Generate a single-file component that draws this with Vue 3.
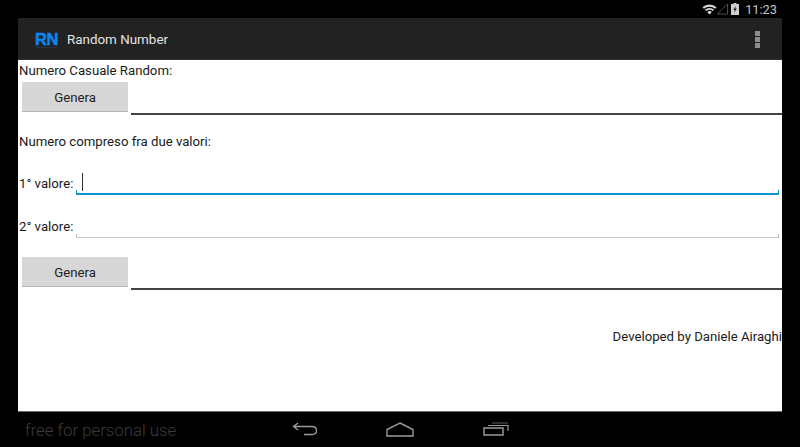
<template>
  <div class="device">
    <div class="status-bar">
      <svg class="wifi" width="15" height="11" viewBox="0 0 16 11">
        <path d="M0.5 3.2 A11 11 0 0 1 15.5 3.2 L14 4.8 A9 9 0 0 0 2 4.8 Z" fill="#d8d8d8" />
        <path d="M3 5.8 A7.5 7.5 0 0 1 13 5.8 L11.6 7.2 A5.5 5.5 0 0 0 4.4 7.2 Z" fill="#d8d8d8" />
        <path d="M5.5 8.2 A4 4 0 0 1 10.5 8.2 L8 10.8 Z" fill="#d8d8d8" />
      </svg>
      <svg class="signal" width="11" height="12" viewBox="0 0 12 12">
        <path d="M0.5 11.5 L11.5 0.5 V11.5 Z" fill="none" stroke="#555" stroke-width="1" />
      </svg>
      <svg class="battery" width="8" height="12" viewBox="0 0 8 12">
        <rect x="2.5" y="0" width="3" height="1.5" fill="#cfcfcf" />
        <rect x="0" y="1" width="8" height="11" fill="#cfcfcf" />
        <path d="M4.8 2.5 L2.2 7 H3.8 L3.2 10 L5.8 5.5 H4.2 Z" fill="#222" />
      </svg>
      <span class="clock">11:23</span>
    </div>

    <div class="screen">
      <header class="action-bar">
        <div class="logo">
          <span class="logo-text">RN</span>
          <span class="logo-sub"></span>
        </div>
        <span class="app-title">Random Number</span>
        <div class="overflow">
          <i></i>
          <i></i>
          <i></i>
        </div>
      </header>

      <main class="content">
        <p class="label first">Numero Casuale Random:</p>
        <div class="generate-row">
          <button class="btn">Genera</button>
          <div class="result"></div>
        </div>

        <p class="label range">Numero compreso fra due valori:</p>

        <div class="field-row one">
          <span class="label">1° valore:</span>
          <div class="field focused"><span class="caret"></span></div>
        </div>
        <div class="field-row two">
          <span class="label">2° valore:</span>
          <div class="field"></div>
        </div>

        <div class="generate-row second">
          <button class="btn">Genera</button>
          <div class="result"></div>
        </div>

        <p class="credit">Developed by Daniele Airaghi</p>
      </main>
    </div>

    <div class="nav-bar">
      <span class="watermark">free for personal use</span>
      <svg class="nav-back" width="26" height="14" viewBox="0 0 26 14">
        <path d="M6 1 L1.5 4.5 L6 8 M1.5 4.5 H20 Q24.5 4.5 24.5 8.5 Q24.5 12.5 20 12.5 H12" fill="none" stroke="#9a9a9a" stroke-width="1.3" />
      </svg>
      <svg class="nav-home" width="28" height="15" viewBox="0 0 28 15">
        <path d="M14 1 L27 7.5 V14 H1 V7.5 Z" fill="none" stroke="#9a9a9a" stroke-width="1.4" />
      </svg>
      <svg class="nav-recent" width="26" height="14" viewBox="0 0 26 14">
        <path d="M1 6 H20 V13 H1 Z" fill="none" stroke="#9a9a9a" stroke-width="1.4" />
        <path d="M5 3.5 H25 V9" fill="none" stroke="#9a9a9a" stroke-width="1.2" />
        <path d="M9 1 H25" fill="none" stroke="#777" stroke-width="0.8" />
      </svg>
    </div>
  </div>
</template>

<script setup>
</script>

<style>
html,
body {
  margin: 0;
  background: #000;
}
</style>

<style scoped>
.device {
  width: 800px;
  height: 447px;
  background: #000;
  display: flex;
  flex-direction: column;
  overflow: hidden;
  font-family: Roboto, "Liberation Sans", sans-serif;
}

.status-bar {
  height: 18px;
  display: flex;
  align-items: center;
  justify-content: flex-end;
  padding-right: 23px;
  flex-shrink: 0;
}

.battery {
  margin-left: 3px;
}

.clock {
  margin-left: 6px;
  color: #c4c4c4;
  font-size: 12.8px;
}

.screen {
  margin: 0 18px;
  display: flex;
  flex-direction: column;
  flex-shrink: 0;
  background: #fff;
  border-bottom: 1px solid #666;
  height: 392.5px;
}

.action-bar {
  height: 42px;
  flex-shrink: 0;
  background: #222;
  display: flex;
  align-items: center;
  padding: 0 22px 0 17px;
  box-shadow: inset 0 -1px 0 #333;
}

.logo {
  width: 23px;
  height: 16px;
  margin-top: 1px;
  display: flex;
  flex-direction: column;
  align-items: center;
}

.logo-text {
  color: #0a86f0;
  font-family: "Liberation Sans", sans-serif;
  font-weight: 700;
  font-size: 16.5px;
  line-height: 14px;
  letter-spacing: -0.3px;
  -webkit-text-stroke: 0.5px #0a86f0;
}

.logo-sub {
  width: 21px;
  height: 1px;
  margin-top: 1px;
  background: #223644;
}

.app-title {
  margin-left: 9px;
  margin-top: 1px;
  color: #e4e4e4;
  font-size: 13.4px;
}

.overflow {
  margin-left: auto;
  display: flex;
  flex-direction: column;
  gap: 1px;
}

.overflow i {
  display: block;
  width: 5px;
  height: 5px;
  background: #8c8c8c;
}

.content {
  flex: 1;
  min-height: 0;
  color: #1a1a1a;
  font-size: 13.2px;
  line-height: 18px;
}

.label {
  margin: 0;
  padding-left: 1px;
  white-space: nowrap;
}

.first {
  padding-top: 2px;
}

.generate-row {
  display: flex;
  align-items: flex-start;
  margin-top: 2px;
  padding-left: 4px;
}

.second {
  margin-top: 19px;
}

.btn {
  width: 106px;
  height: 30px;
  padding: 2px 0 0;
  flex-shrink: 0;
  border: 0;
  border-bottom: 1px solid #b4b4b4;
  background: #d7d7d7;
  color: #222;
  font-family: inherit;
  font-size: 13.2px;
}

.result {
  flex: 1;
  height: 2px;
  margin-top: 31px;
  margin-left: 3px;
  background: #444;
}

.range {
  margin-top: 18px;
}

.field-row {
  display: flex;
  align-items: flex-end;
}

.field-row .label {
  padding-bottom: 2px;
}

.one {
  margin-top: 16px;
}

.two {
  margin-top: 15px;
}

.field {
  width: 703px;
  height: 28px;
  margin-left: 3px;
  position: relative;
  border-bottom: 1px solid #c4c4c4;
  box-sizing: border-box;
}

.field::before,
.field::after {
  content: "";
  position: absolute;
  bottom: 0;
  width: 1px;
  height: 3px;
  background: #c4c4c4;
}

.field::before {
  left: 0;
}

.field::after {
  right: 0;
}

.focused {
  border-bottom: 2px solid #0f8fcb;
}

.focused::before,
.focused::after {
  background: #0f8fcb;
}

.caret {
  position: absolute;
  left: 6px;
  top: 6px;
  width: 1px;
  height: 18px;
  background: #333;
}

.credit {
  margin: 38px 0 0;
  text-align: right;
  white-space: nowrap;
}

.nav-bar {
  flex: 1;
  min-height: 0;
  position: relative;
  display: flex;
  align-items: center;
}

.watermark {
  position: absolute;
  left: 25px;
  top: 8px;
  color: #3c3c3c;
  font-size: 16.8px;
  font-weight: 300;
}

.nav-back {
  margin-left: 292px;
}

.nav-home {
  margin-left: 68px;
}

.nav-recent {
  margin-left: 69px;
}
</style>
